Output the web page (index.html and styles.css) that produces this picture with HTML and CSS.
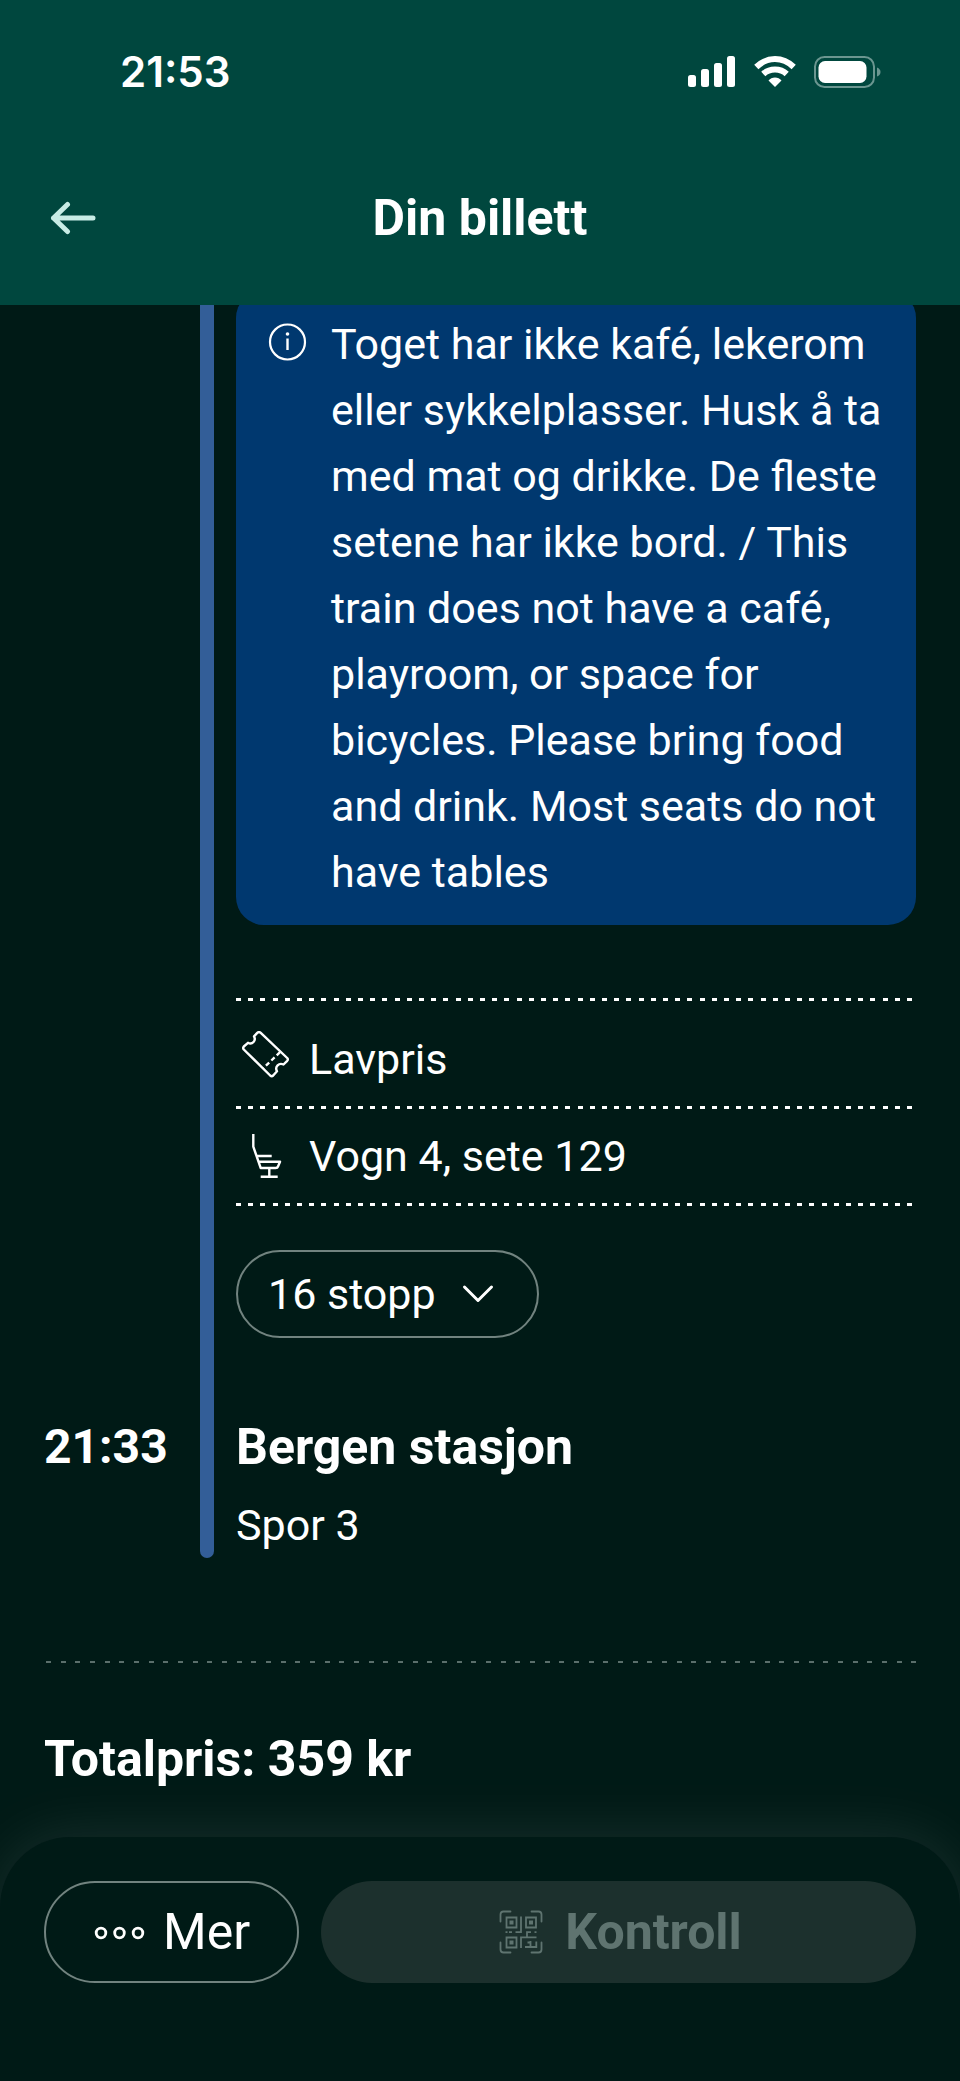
FILE: index.html
```html
<!DOCTYPE html>
<html lang="no">
<head>
<meta charset="utf-8">
<meta name="viewport" content="width=device-width, initial-scale=1">
<title>Din billett</title>
<link rel="stylesheet" href="styles.css">
</head>
<body>
<header class="header">
  <div class="status">
    <span class="status-time">21:53</span>
    <div class="status-icons">
      <svg width="48" height="31" viewBox="0 0 48 31" fill="#fff" aria-hidden="true">
        <rect x="0" y="19" width="8" height="12" rx="2.5"/><rect x="13" y="13" width="8" height="18" rx="2.5"/><rect x="26" y="7" width="8" height="24" rx="2.5"/><rect x="39" y="0" width="8" height="31" rx="2.5"/>
      </svg>
      <svg width="42" height="31" viewBox="0 0 42 31" aria-hidden="true">
        <g fill="none" stroke="#fff" stroke-width="6"><path d="M2.3 11Q10.5 3 21 3T39.700 11"/><path d="M9.300 18Q14 13.500 21 13.500T32.700 18"/></g>
        <path d="M21 31l-6.500-6.500Q17 21.500 21 21.500T27.500 24.500z" fill="#fff"/>
      </svg>
      <svg width="67" height="32" viewBox="0 0 67 32" aria-hidden="true">
        <rect x="1" y="1" width="59" height="30" rx="9.500" fill="none" stroke="#6b9690" stroke-width="2"/>
        <rect x="4.500" y="5" width="48" height="22" rx="6.500" fill="#fff"/>
        <path d="M63 11.500q3.500 1.500 3.500 4.500T63 20.500z" fill="#6b9690"/>
      </svg>
    </div>
  </div>
  <nav class="nav">
    <button class="back" type="button" aria-label="Tilbake">
      <svg width="46" height="34" viewBox="0 0 46 34" fill="none" stroke="#c8ece5" stroke-width="5" stroke-linecap="round" stroke-linejoin="round" aria-hidden="true"><path d="M43 17H3.500M17.500 3.500L3.500 17l14 13.500"/></svg>
    </button>
    <h1 class="title">Din billett</h1>
  </nav>
</header>

<main class="main">
  <section class="journey">
    <div class="track"></div>
    <div class="leg">
      <div class="notice">
        <svg class="notice-icon" width="40" height="40" viewBox="0 0 40 40" aria-hidden="true">
          <circle cx="19.500" cy="20" r="17.500" fill="none" stroke="#fff" stroke-width="2.200"/><circle cx="19.500" cy="12" r="1.800" fill="#fff"/><path d="M19.500 16.500V28" stroke="#fff" stroke-width="2.400"/>
        </svg>
        <p class="notice-text">Toget har ikke kafé, lekerom eller sykkelplasser. Husk å ta med mat og drikke. De fleste setene har ikke bord. / This train does not have a café, playroom, or space for bicycles. Please bring food and drink. Most seats do not have tables</p>
      </div>
      <ul class="details">
        <li class="detail">
          <svg width="48" height="56" viewBox="0 -4 48 56" fill="none" stroke="#fff" stroke-width="2.400" stroke-linejoin="round" aria-hidden="true">
            <path d="M1.800 11.500L6 7.800q3.200 1.700 5.500-.8t.5-5.700l3.500-3.600q1.500-1.200 3 0L45.200 23q1.300 1.400 0 2.800L41.500 29.500q-3.400-1.600-5.900.9T35 36.300l-3.800 4.200q-1.500 1.300-3 0L1.800 14.500q-1.200-1.500 0-3z"/>
            <path d="M38 17.200L21 33.500" stroke-dasharray="4.500 3"/>
          </svg>
          <span>Lavpris</span>
        </li>
        <li class="detail">
          <svg width="48" height="56" viewBox="0 -4 48 56" fill="none" stroke="#fff" stroke-width="2.400" stroke-linejoin="round" aria-hidden="true">
            <path d="M11.300 2v12.700l7.400 21.300h15q1.800 0 2.300-1.500l2-4.800H17M15 24h14.700M27.300 36v8.700M18.700 44.700h17"/>
          </svg>
          <span>Vogn 4, sete 129</span>
        </li>
      </ul>
      <button class="pill stops" type="button" aria-expanded="false">
        <span>16 stopp</span>
        <svg width="48" height="48" viewBox="0 0 48 48" fill="none" stroke="#fff" stroke-width="3" stroke-linecap="round" stroke-linejoin="round" aria-hidden="true"><path d="M10.500 17L24 30.500 37.500 17"/></svg>
      </button>
    </div>
    <time class="arrival-time">21:33</time>
    <div class="arrival">
      <h2 class="heading">Bergen stasjon</h2>
      <p class="platform">Spor 3</p>
    </div>
  </section>
  <hr class="divider">
  <p class="heading total">Totalpris: 359 kr</p>
</main>

<footer class="actions">
  <button class="pill more" type="button">
    <svg width="52" height="52" viewBox="0 0 52 52" fill="none" stroke="#fff" stroke-width="2.800" aria-hidden="true"><circle cx="8" cy="27" r="4.800"/><circle cx="26.500" cy="27" r="4.800"/><circle cx="45" cy="27" r="4.800"/></svg>
    <span>Mer</span>
  </button>
  <button class="pill control" type="button" disabled>
    <svg width="52" height="52" viewBox="-4.500 -4.500 52 52" fill="none" stroke="#5f7470" stroke-width="1.800" aria-hidden="true">
      <path stroke-linecap="round" d="M1 11V4q0-3 3-3h7M32 1h7q3 0 3 3v7M42 32v7q0 3-3 3h-7M11 42H4q-3 0-3-3v-7"/>
      <path d="M7 7h10v10H7zM26.500 7h10v10h-10zM7 27h10v10H7z"/>
      <path d="M10 10h4v4h-4zM29.500 10h4v4h-4zM10 30h4v4h-4z" fill="#5f7470" stroke="none"/>
      <path d="M21.500 6v15.700h-5.500M6 21.700h2M9.500 21.700h3M27.500 26.500v-4.800h4M35 21.700h2M37 26.800H21.500V37.500M31 30.500v6M25.500 36.500h11.300v-5.500M28 32h3"/>
    </svg>
    <span>Kontroll</span>
  </button>
</footer>
</body>
</html>
```
FILE: styles.css
```css
* {
  box-sizing: border-box;
  margin: 0;
  padding: 0;
}

body {
  min-height: 100vh;
  display: flex;
  flex-direction: column;
  background: #001a16;
  color: #fff;
  font: 400 43px/66px Roboto, "Liberation Sans", sans-serif;
}

svg {
  display: block;
  flex: none;
}

button {
  font: inherit;
  color: inherit;
  background: none;
  border: 0;
}

.header {
  position: relative;
  z-index: 1;
  padding-bottom: 12px;
  background: #00473e;
}

.status {
  height: 143px;
  padding: 0 79px 0 120px;
  display: flex;
  align-items: center;
  justify-content: space-between;
}

.status-time {
  font-family: Inter, sans-serif;
  font-size: 42px;
  font-weight: 600;
}

.status-icons {
  display: flex;
  align-items: center;
  gap: 18px;
}

.nav {
  height: 150px;
  padding: 0 50px;
  display: grid;
  grid-template-columns: 1fr auto 1fr;
  align-items: center;
}

.back {
  justify-self: start;
}

.title,
.heading {
  font-size: 50px;
  font-weight: 700;
}

.main {
  padding: 0 44px 45px;
}

.journey {
  display: grid;
  grid-template-columns: 134px 14px 1fr;
  column-gap: 22px;
}

.track {
  grid-area: 1 / 2 / 3 / 3;
  background: #335e98;
  border-radius: 0 0 7px 7px;
}

.leg {
  grid-area: 1 / 3;
}

.notice {
  display: flex;
  gap: 23px;
  margin-top: -15px;
  padding: 21px 32px 20px;
  border-radius: 28px;
  background: #00386f;
}

.notice-icon {
  margin-top: 11px;
}

.details {
  list-style: none;
  margin-top: 73px;
}

.details,
.detail {
  --dash: #fff;
  background-image: linear-gradient(90deg,
    var(--dash) 5px, transparent 5px 12px,
    var(--dash) 12px 17px, transparent 17px 24px,
    var(--dash) 24px 29px, transparent 29px 37px,
    var(--dash) 37px 42px, transparent 42px 49px,
    var(--dash) 49px 54px, transparent 54px);
  background-repeat: repeat-x;
  background-size: 61px 3px;
}

.details {
  padding-top: 3px;
}

.detail {
  display: flex;
  align-items: center;
  gap: 19px;
  padding: 14px 0 17px 6px;
  background-position: left bottom;
}

.detail:first-child {
  padding-top: 25px;
}

.pill {
  display: flex;
  align-items: center;
  justify-content: center;
  gap: 18px;
  border: 2px solid #71837f;
  border-radius: 51px;
}

.stops {
  height: 88px;
  margin: 44px 0 76px;
  padding: 0 35px 0 30px;
}

.arrival-time {
  grid-area: 2 / 1;
  font-size: 48px;
  font-weight: 700;
}

.arrival {
  grid-area: 2 / 3;
}

.platform {
  margin-top: 12px;
}

.divider {
  height: 2px;
  margin: 103px 0 63px;
  border: 0;
  background: linear-gradient(90deg,
    transparent 2px, #5a6f6b 2px 7px,
    transparent 7px 17px, #5a6f6b 17px 22px,
    transparent 22px 31px, #5a6f6b 31px 36px,
    transparent 36px) 0 0 / 44px 2px repeat-x;
}

.actions {
  flex: 1;
  display: flex;
  align-items: flex-start;
  gap: 22px;
  padding: 44px;
  border-radius: 70px 70px 0 0;
  background: #001a16;
  box-shadow: 0 0 60px rgba(255, 255, 255, 0.1);
}

.more,
.control {
  height: 102px;
  font-size: 50px;
}

.more {
  padding: 0 47px;
}

.control {
  flex: 1;
  border: 0;
  background: #1c302d;
  color: #5f7470;
  font-weight: 700;
}
```
